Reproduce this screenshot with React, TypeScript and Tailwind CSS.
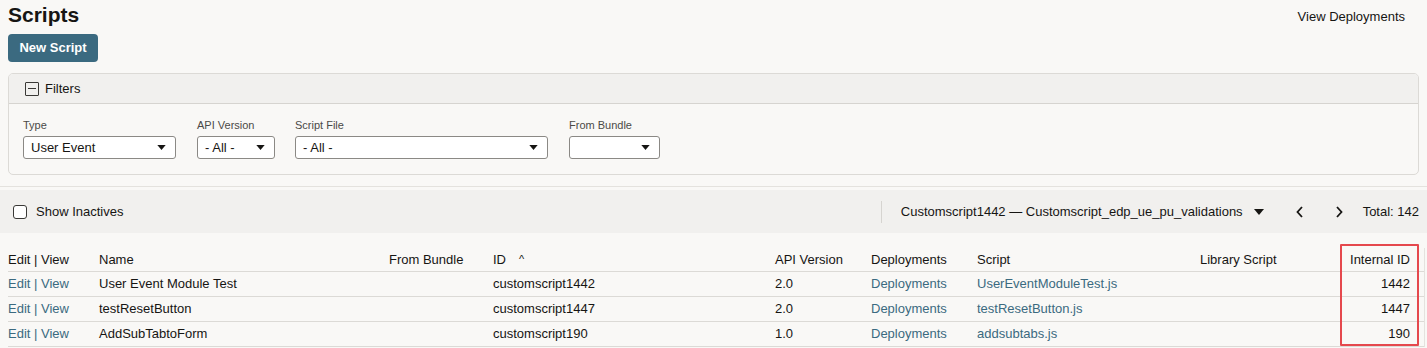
import React from "react";

const Caret = ({ w = 10, h = 6 }: { w?: number; h?: number }) => (
  <svg width={w} height={h} viewBox="0 0 10 6" className="shrink-0">
    <path d="M0 0 L10 0 L5 6 Z" fill="#161513" />
  </svg>
);

const Chevron = ({ dir }: { dir: "l" | "r" }) => (
  <svg width="7" height="12" viewBox="0 0 7 12" className="shrink-0">
    <path d={dir === "l" ? "M6 1 L1.5 6 L6 11" : "M1 1 L5.5 6 L1 11"} fill="none" stroke="#161513" strokeWidth="1.8" />
  </svg>
);

function Select({ w, value }: { w: string; value: string }) {
  return (
    <div className={`${w} h-[23px] border border-[#8b8985] rounded-[3px] bg-white flex items-center justify-between pl-[7px] pr-[9px] text-[13px] text-[#161513]`}>
      <span>{value}</span>
      <Caret w={9} h={5} />
    </div>
  );
}

const rows = [
  { name: "User Event Module Test", id: "customscript1442", api: "2.0", script: "UserEventModuleTest.js", iid: "1442" },
  { name: "testResetButton", id: "customscript1447", api: "2.0", script: "testResetButton.js", iid: "1447" },
  { name: "AddSubTabtoForm", id: "customscript190", api: "1.0", script: "addsubtabs.js", iid: "190" },
];

export default function App() {
  return (
    <div className="w-[1427px] h-[348px] bg-[#f9f8f6] overflow-hidden relative text-[#161513]" style={{ fontFamily: '"Liberation Sans", Arial, sans-serif' }}>
      <div className="flex justify-between items-start pl-[8px] pr-[22px]">
        <h1 className="text-[21px] font-bold leading-[28px] mt-[1px]">Scripts</h1>
        <div className="text-[13px] mt-[7px]">View Deployments</div>
      </div>
      <div className="pl-[8px] mt-[5px]">
        <button className="h-[28px] w-[90px] rounded-[4px] bg-[#3b6a80] text-white text-[13px] font-bold">New Script</button>
      </div>
      <div className="mx-[8px] mt-[11px] h-[102px] border border-[#dcdad6] rounded-[5px] overflow-hidden">
        <div className="h-[30px] bg-[#f1f0ee] border-b border-[#d6d4d0] flex items-center pl-[16px] gap-[6px]">
          <div className="w-[14px] h-[14px] border-[1.5px] border-[#3a3936] rounded-[1px] flex items-center justify-center">
            <div className="w-[8px] h-[1.5px] bg-[#3a3936]" />
          </div>
          <span className="text-[13px]">Filters</span>
        </div>
        <div className="flex items-start pl-[14px] pt-[14px]">
          <div className="flex flex-col">
            <span className="text-[11px] text-[#4b4a47] leading-[14px] mb-[4px]">Type</span>
            <Select w="w-[153px]" value="User Event" />
          </div>
          <div className="flex flex-col ml-[21px]">
            <span className="text-[11px] text-[#4b4a47] leading-[14px] mb-[4px]">API Version</span>
            <Select w="w-[78px]" value="- All -" />
          </div>
          <div className="flex flex-col ml-[20px]">
            <span className="text-[11px] text-[#4b4a47] leading-[14px] mb-[4px]">Script File</span>
            <Select w="w-[253px]" value="- All -" />
          </div>
          <div className="flex flex-col ml-[21px]">
            <span className="text-[11px] text-[#4b4a47] leading-[14px] mb-[4px]">From Bundle</span>
            <Select w="w-[91px]" value="" />
          </div>
        </div>
      </div>
      <div className="mt-[11px] border-t border-[#e4e2de]" />
      <div className="mt-[3px] h-[43px] bg-[#f1f0ee] flex items-center pl-[13px] pr-[8px] text-[13px]">
        <div className="w-[14px] h-[14px] border-[1.5px] border-[#3a3936] rounded-[3px] bg-white" />
        <span className="ml-[9px]">Show Inactives</span>
        <div className="flex-1" />
        <div className="w-px h-[22px] bg-[#d6d4d0]" />
        <span className="ml-[19px]">Customscript1442 — Customscript_edp_ue_pu_validations</span>
        <span className="ml-[11px]"><Caret /></span>
        <span className="ml-[32px]"><Chevron dir="l" /></span>
        <span className="ml-[33px]"><Chevron dir="r" /></span>
        <span className="ml-[20px]">Total: 142</span>
      </div>
      <div className="mt-[15px] pl-[8px] pr-[2px]">
        <div className="grid grid-cols-[91px_290px_104px_282px_96px_106px_223px_1fr] text-[13px] border-r border-[#e4e2de]">
          <div className="h-[24px] flex items-center border-b border-[#dcdad6]">Edit | View</div>
          <div className="h-[24px] flex items-center border-b border-[#dcdad6]">Name</div>
          <div className="h-[24px] flex items-center border-b border-[#dcdad6]">From Bundle</div>
          <div className="h-[24px] flex items-center border-b border-[#dcdad6]">ID<span className="ml-[13px] text-[11px]">^</span></div>
          <div className="h-[24px] flex items-center border-b border-[#dcdad6]">API Version</div>
          <div className="h-[24px] flex items-center border-b border-[#dcdad6]">Deployments</div>
          <div className="h-[24px] flex items-center border-b border-[#dcdad6]">Script</div>
          <div className="h-[24px] flex items-center border-b border-[#dcdad6]">
            <span>Library Script</span>
            <span className="ml-auto pr-[14px]">Internal ID</span>
          </div>
          {rows.map((r) => (
            <React.Fragment key={r.id}>
              <div className="h-[25px] flex items-center border-b border-[#dcdad6] text-[#3b6a80]">Edit&nbsp;<span className="text-[#3b6a80]">|</span>&nbsp;View</div>
              <div className="h-[25px] flex items-center border-b border-[#dcdad6]">{r.name}</div>
              <div className="h-[25px] flex items-center border-b border-[#dcdad6]" />
              <div className="h-[25px] flex items-center border-b border-[#dcdad6]">{r.id}</div>
              <div className="h-[25px] flex items-center border-b border-[#dcdad6]">{r.api}</div>
              <div className="h-[25px] flex items-center border-b border-[#dcdad6] text-[#3b6a80]">Deployments</div>
              <div className="h-[25px] flex items-center border-b border-[#dcdad6] text-[#3b6a80]">{r.script}</div>
              <div className="h-[25px] flex items-center justify-end pr-[14px] border-b border-[#dcdad6]">{r.iid}</div>
            </React.Fragment>
          ))}
        </div>
      </div>
      <div className="absolute left-[1340px] top-[244px] w-[79px] h-[102px] border-[2.5px] border-[#e5484d] rounded-[1px]" />
    </div>
  );
}
